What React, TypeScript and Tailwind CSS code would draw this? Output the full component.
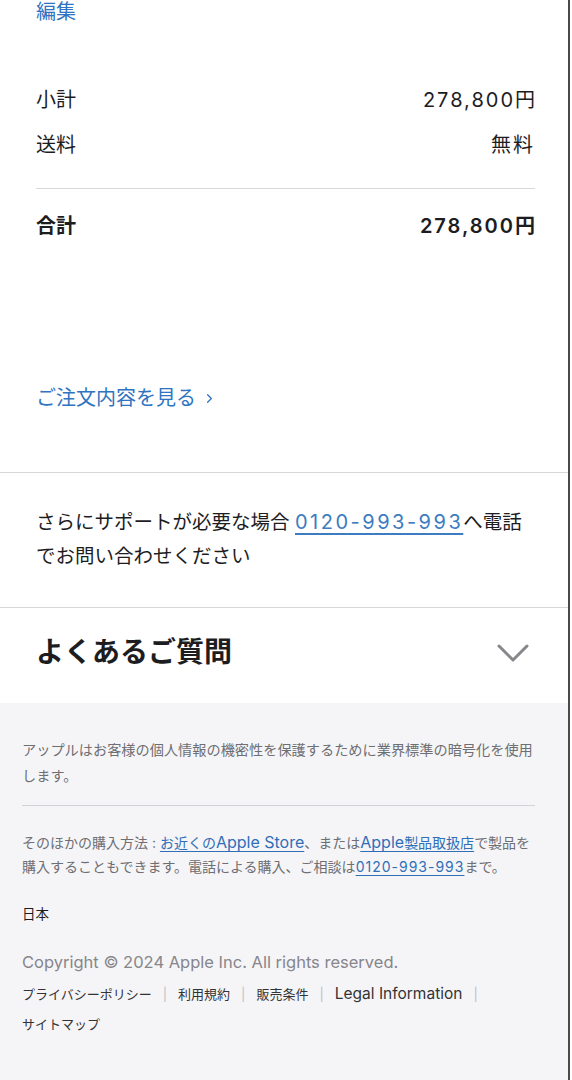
import { ChevronRight } from "lucide-react";

const font = { fontFamily: 'Inter, "Noto Sans CJK JP", sans-serif' };

function Row({ label, value, bold }: { label: string; value: string; bold?: boolean }) {
  return (
    <div className={`flex justify-between items-center h-[28px] text-[20px] text-[#1d1d1f] ${bold ? "font-semibold" : ""}`}>
      <span>{label}</span>
      <span className="tracking-[2px]">
        {value.replace("円", "")}
        <span className="tracking-normal">{value.includes("円") ? "円" : ""}</span>
      </span>
    </div>
  );
}

export default function App() {
  return (
    <div className="w-[572px] min-h-[1080px] bg-white" style={font}>
      <div className="w-[570px] min-h-[1080px] border-r-2 border-[#4a4a4a] flex flex-col">
        {/* summary */}
        <div className="pl-[36px] pr-[33px] pb-[62px]">
          <div className="h-[24px] leading-[24px] text-[20px] text-[#2f74c0]">編集</div>
          <div className="mt-[62px]">
            <Row label="小計" value="278,800円" />
          </div>
          <div className="mt-[17px]">
            <Row label="送料" value="無料" />
          </div>
          <div className="mt-[29px] border-t border-[#d8d8dc]" />
          <div className="mt-[23px]">
            <Row label="合計" value="278,800円" bold />
          </div>
          <a className="mt-[146px] flex items-center h-[24px] text-[20px] text-[#2f74c0]">
            ご注文内容を見る
            <ChevronRight size={15} strokeWidth={2} className="ml-[6px] mt-[1px]" />
          </a>
        </div>

        {/* support */}
        <div className="border-t border-[#d8d8dc] pl-[36px] pr-[33px] pt-[32px] pb-[34px]">
          <p className="text-[19.5px] leading-[34px] text-[#1d1d1f]">
            さらにサポートが必要な場合{" "}
            <a className="text-[20px] tracking-[2.5px] text-[#3d7cc0] underline underline-offset-[4px]">0120-993-993</a>へ電話でお問い合わせください
          </p>
        </div>

        {/* faq */}
        <div className="border-t border-[#d8d8dc] pl-[36px] pr-[33px] pt-[24px] pb-[31px] flex items-center justify-between">
          <h2 className="h-[40px] leading-[40px] text-[28px] font-bold text-[#1d1d1f]">よくあるご質問</h2>
          <svg width="32" height="18" viewBox="0 0 32 18" className="mr-[6px] mt-[2px]">
            <path d="M2 2 L16 16 L30 2" fill="none" stroke="#86868b" strokeWidth="3" strokeLinecap="round" strokeLinejoin="round" />
          </svg>
        </div>

        {/* footer */}
        <div className="flex-1 bg-[#f5f5f7] pl-[22px] pr-[26px] pt-[34px] pb-[40px]">
          <p className="text-[14.2px] leading-[26px] text-[#6e6e73]">
            アップルはお客様の個人情報の機密性を保護するために業界標準の暗号化を使用します。
          </p>
          <div className="mt-[16px] mr-[7px] border-t border-[#d2d2d7]" />
          <p className="mt-[24px] text-[14px] leading-[24px] text-[#6e6e73]">
            そのほかの購入方法 :{" "}
            <a className="text-[#2f6fb8] underline underline-offset-[3px]">
              お近くの<span className="text-[16px]">Apple Store</span>
            </a>
            、または
            <a className="text-[#2f6fb8] underline underline-offset-[3px]">
              <span className="text-[16px]">Apple</span>製品取扱店
            </a>
            で製品を購入することもできます。電話による購入、ご相談は
            <a className="text-[#2f6fb8] tracking-[1px] underline underline-offset-[3px]">0120-993-993</a>まで。
          </p>
          <div className="mt-[23px] h-[24px] leading-[24px] text-[13.5px] text-[#1d1d1f]">日本</div>
          <div className="mt-[24px] h-[24px] leading-[24px] text-[16.5px] text-[#86868b]">
            Copyright © 2024 Apple Inc. All rights reserved.
          </div>
          <div className="mt-[5px] flex flex-wrap text-[13px] leading-[30px] text-[#333336]">
            {["プライバシーポリシー", "利用規約", "販売条件", "Legal Information"].map((l) => (
              <span key={l} className="flex items-center">
                <a className={l === "Legal Information" ? "text-[15.5px]" : ""}>{l}</a>
                <span className="mx-[11px] text-[#c0c0c5]">|</span>
              </span>
            ))}
            <a className="w-full">サイトマップ</a>
          </div>
        </div>
      </div>
    </div>
  );
}
